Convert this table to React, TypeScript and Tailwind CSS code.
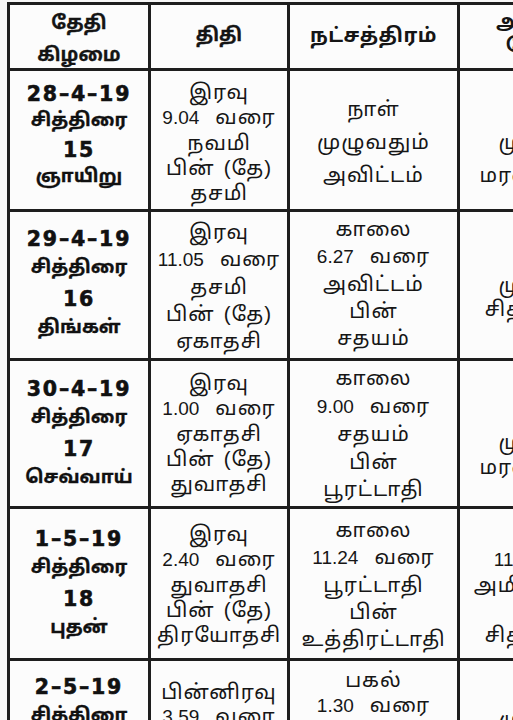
import React from "react";

const tamil = "font-['Liberation_Sans','Noto_Sans_Tamil','Noto_Sans',sans-serif]";
const tamilBold = "font-['Noto_Sans_Tamil','Noto_Sans','DejaVu_Sans',sans-serif] font-bold";

type Cell = { lines: string[]; cls: string };
type Row = {
  h: string;
  align: string;
  date: Cell;
  tithi: Cell;
  nak: Cell;
  yoga: Cell;
};

const rows: Row[] = [
  {
    h: "h-[138px]",
    align: "items-center",
    date: { lines: ["28–4–19", "சித்திரை", "15", "ஞாயிறு"], cls: "leading-[28px] pb-[8px]" },
    tithi: { lines: ["இரவு", "9.04 வரை", "நவமி", "பின் (தே)", "தசமி"], cls: "leading-[25px] pt-[4px]" },
    nak: { lines: ["நாள்", "முழுவதும்", "அவிட்டம்"], cls: "leading-[33px] pt-[3px]" },
    yoga: { lines: ["நாள்", "முழுவதும்", "மரணயோகம்"], cls: "leading-[33px] pt-[3px]" },
  },
  {
    h: "h-[146px]",
    align: "items-center",
    date: { lines: ["29–4–19", "சித்திரை", "16", "திங்கள்"], cls: "leading-[30px] pb-[2px]" },
    tithi: { lines: ["இரவு", "11.05 வரை", "தசமி", "பின் (தே)", "ஏகாதசி"], cls: "leading-[27px] pt-[2px]" },
    nak: { lines: ["காலை", "6.27 வரை", "அவிட்டம்", "பின்", "சதயம்"], cls: "leading-[27px] pb-[4px]" },
    yoga: { lines: ["நாள்", "முழுவதும்", "சித்தயோகம்"], cls: "leading-[24px]" },
  },
  {
    h: "h-[145px]",
    align: "items-center",
    date: { lines: ["30–4–19", "சித்திரை", "17", "செவ்வாய்"], cls: "leading-[30px]" },
    tithi: { lines: ["இரவு", "1.00 வரை", "ஏகாதசி", "பின் (தே)", "துவாதசி"], cls: "leading-[25px] pb-[2px]" },
    nak: { lines: ["காலை", "9.00 வரை", "சதயம்", "பின்", "பூரட்டாதி"], cls: "leading-[27.5px]" },
    yoga: { lines: ["நாள்", "முழுவதும்", "மரணயோகம்"], cls: "leading-[25px] pt-[16px]" },
  },
  {
    h: "h-[149px]",
    align: "items-center",
    date: { lines: ["1–5–19", "சித்திரை", "18", "புதன்"], cls: "leading-[30px]" },
    tithi: { lines: ["இரவு", "2.40 வரை", "துவாதசி", "பின் (தே)", "திரயோதசி"], cls: "leading-[25px]" },
    nak: { lines: ["காலை", "11.24 வரை", "பூரட்டாதி", "பின்", "உத்திரட்டாதி"], cls: "leading-[27px]" },
    yoga: { lines: ["காலை", "11.24 வரை", "அமிர்தயோகம்", "பின்", "சித்தயோகம்"], cls: "leading-[25px]" },
  },
  {
    h: "h-[120px]",
    align: "items-start",
    date: { lines: ["2–5–19", "சித்திரை", "19", "வியாழன்"], cls: "leading-[30px] pt-[11px]" },
    tithi: { lines: ["பின்னிரவு", "3.59 வரை", "திரயோதசி", "பின் (தே)", "சதுர்த்தசி"], cls: "leading-[24px] pt-[19px]" },
    nak: { lines: ["பகல்", "1.30 வரை", "உத்திரட்டாதி", "பின்", "ரேவதி"], cls: "leading-[25px] pt-[6px]" },
    yoga: { lines: ["நாள்", "முழுவதும்", "சித்தயோகம்"], cls: "leading-[25px] pt-[20px]" },
  },
];

function Line({ text }: { text: string }) {
  const m = text.match(/^([\d.]+)\s+(.*)$/);
  if (m) {
    return (
      <span className="flex items-baseline">
        <span className="text-[19px] tracking-[0px]">{m[1]}</span>
        <span className="ml-[16px]">{m[2]}</span>
      </span>
    );
  }
  const p = text.match(/^(\S+)\s+(\(.*\))$/);
  if (p) {
    return (
      <span className="flex items-baseline">
        <span>{p[1]}</span>
        <span className="ml-[9px]">{p[2]}</span>
      </span>
    );
  }
  return <span>{text}</span>;
}

function Lines({ cell }: { cell: Cell }) {
  return (
    <div
      className={`flex flex-col items-center text-center whitespace-nowrap ${tamil} text-[20.5px] tracking-[1px] text-[#161616] ${cell.cls}`}
    >
      {cell.lines.map((l, i) => (
        <Line key={i} text={l} />
      ))}
    </div>
  );
}

function DateCell({ cell }: { cell: Cell }) {
  return (
    <div className={`flex flex-col items-center text-center text-[#111] whitespace-nowrap ${cell.cls}`}>
      {cell.lines.map((l, i) =>
        i === 0 || i === 2 ? (
          <span
            key={i}
            className="font-['DejaVu_Sans',sans-serif] font-bold text-[20.5px] tracking-[1.8px] [-webkit-text-stroke:0.6px_#111]"
          >
            {l}
          </span>
        ) : (
          <span key={i} className={`${tamilBold} text-[18.5px] [-webkit-text-stroke:0.3px_#111]`}>
            {l}
          </span>
        )
      )}
    </div>
  );
}

const cellBase = "bg-[#fcfcfc] flex justify-center";

export default function App() {
  return (
    <div className="w-[513px] h-[720px] overflow-hidden bg-[#f7f7f7]">
      <div className="ml-[7px] mt-[2px] w-[700px] bg-[#1e1e1e] p-[3px] grid grid-cols-[138px_136px_167px_190px] gap-[3px] text-[#151515]">
        {/* header */}
        <div className={`h-[63px] ${cellBase} items-center`}>
          <div className={`flex flex-col items-center ${tamilBold} text-[19px] leading-[32px] pt-[6px] [-webkit-text-stroke:0.3px_#111]`}>
            <span>தேதி</span>
            <span>கிழமை</span>
          </div>
        </div>
        <div className={`h-[63px] ${cellBase} items-center`}>
          <span className={`${tamilBold} text-[19px] [-webkit-text-stroke:0.3px_#111]`}>திதி</span>
        </div>
        <div className={`h-[63px] ${cellBase} items-center`}>
          <span className={`${tamilBold} text-[20px] tracking-[0.5px]`}>நட்சத்திரம்</span>
        </div>
        <div className={`h-[63px] ${cellBase} items-center`}>
          <div className={`flex flex-col items-center ${tamilBold} text-[20px] leading-[24px] pb-[4px]`}>
            <span>அமிர்தாதி</span>
            <span className="tracking-[4px]">யோகம்</span>
          </div>
        </div>
        {rows.map((r, i) => (
          <React.Fragment key={i}>
            <div className={`${r.h} ${cellBase} ${r.align}`}>
              <DateCell cell={r.date} />
            </div>
            <div className={`${r.h} ${cellBase} ${r.align}`}>
              <Lines cell={r.tithi} />
            </div>
            <div className={`${r.h} ${cellBase} ${r.align}`}>
              <Lines cell={r.nak} />
            </div>
            <div className={`${r.h} ${cellBase} ${r.align}`}>
              <Lines cell={r.yoga} />
            </div>
          </React.Fragment>
        ))}
      </div>
    </div>
  );
}
